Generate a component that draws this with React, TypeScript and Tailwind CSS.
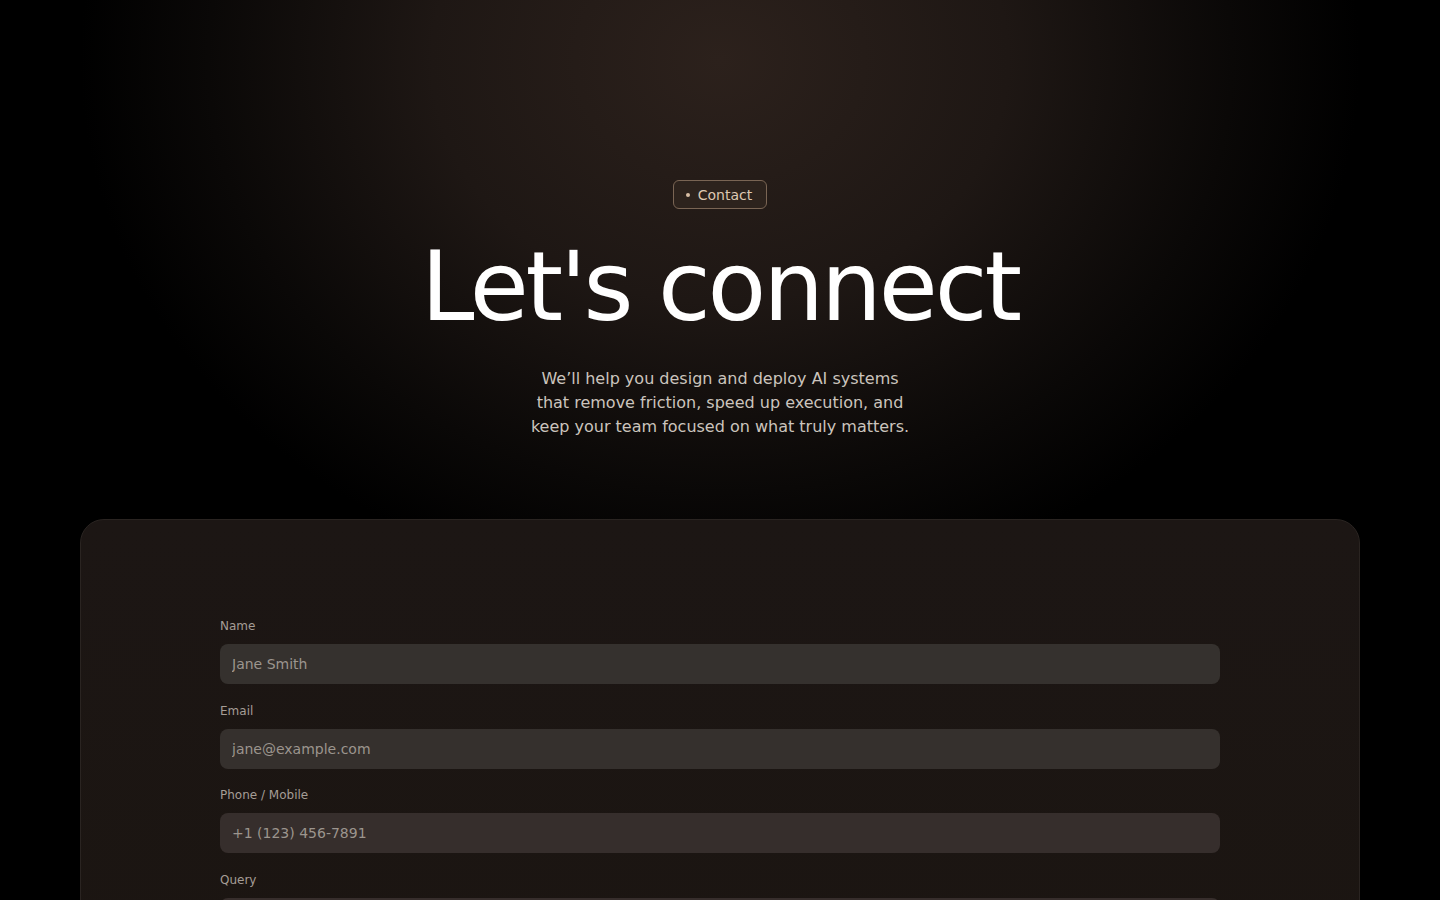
import React from "react";

const fields = [
  { label: "Name", placeholder: "Jane Smith", bg: "bg-[#35312e]" },
  { label: "Email", placeholder: "jane@example.com", bg: "bg-[#35302d]" },
  { label: "Phone / Mobile", placeholder: "+1 (123) 456-7891", bg: "bg-[#362e2c]" },
  { label: "Query", placeholder: "Tell us about your project", bg: "bg-[#372e2c]" },
];

export default function App() {
  return (
    <div
      className="min-h-screen bg-black bg-[radial-gradient(ellipse_640px_540px_at_50%_60px,#2c211c_0%,#1e1714_45%,#0a0807_80%,#000000_100%)] text-white pb-24"
      style={{ fontFamily: '"DejaVu Sans", sans-serif' }}
    >
      <section className="flex flex-col items-center pt-[180px]">
        <div className="h-[29px] flex items-center gap-2 pl-3 pr-[14px] rounded-md border border-[#7a6554] bg-[#2d231d] text-sm text-[#dec8b2]">
          <span className="w-1 h-1 rounded-full bg-[#d9bfa5]" />
          <span>Contact</span>
        </div>
        <h1 className="mt-[30px] text-8xl leading-none tracking-[-0.032em] font-normal text-white">
          Let's connect
        </h1>
        <p className="mt-[32px] max-w-sm text-center text-base leading-6 text-[#cbc4bd]">
          We’ll help you design and deploy AI systems that remove friction, speed up execution, and keep your team focused on what truly matters.
        </p>
      </section>

      <section className="mx-20 mt-20 rounded-3xl border border-[#2a2421] bg-gradient-to-b from-[#1c1614] to-[#1b1511] pt-[98px] pb-24">
        <form className="max-w-[1000px] mx-auto flex flex-col gap-[18.5px]">
          {fields.map((f) => (
            <div key={f.label} className="flex flex-col gap-2.5">
              <label className="text-xs leading-4 text-[#a59d96]">{f.label}</label>
              <input
                placeholder={f.placeholder}
                className={`h-10 w-full rounded-lg ${f.bg} px-3 text-sm text-[#d0c9c2] placeholder:text-[#9c958e] outline-none`}
              />
            </div>
          ))}
        </form>
      </section>
    </div>
  );
}
